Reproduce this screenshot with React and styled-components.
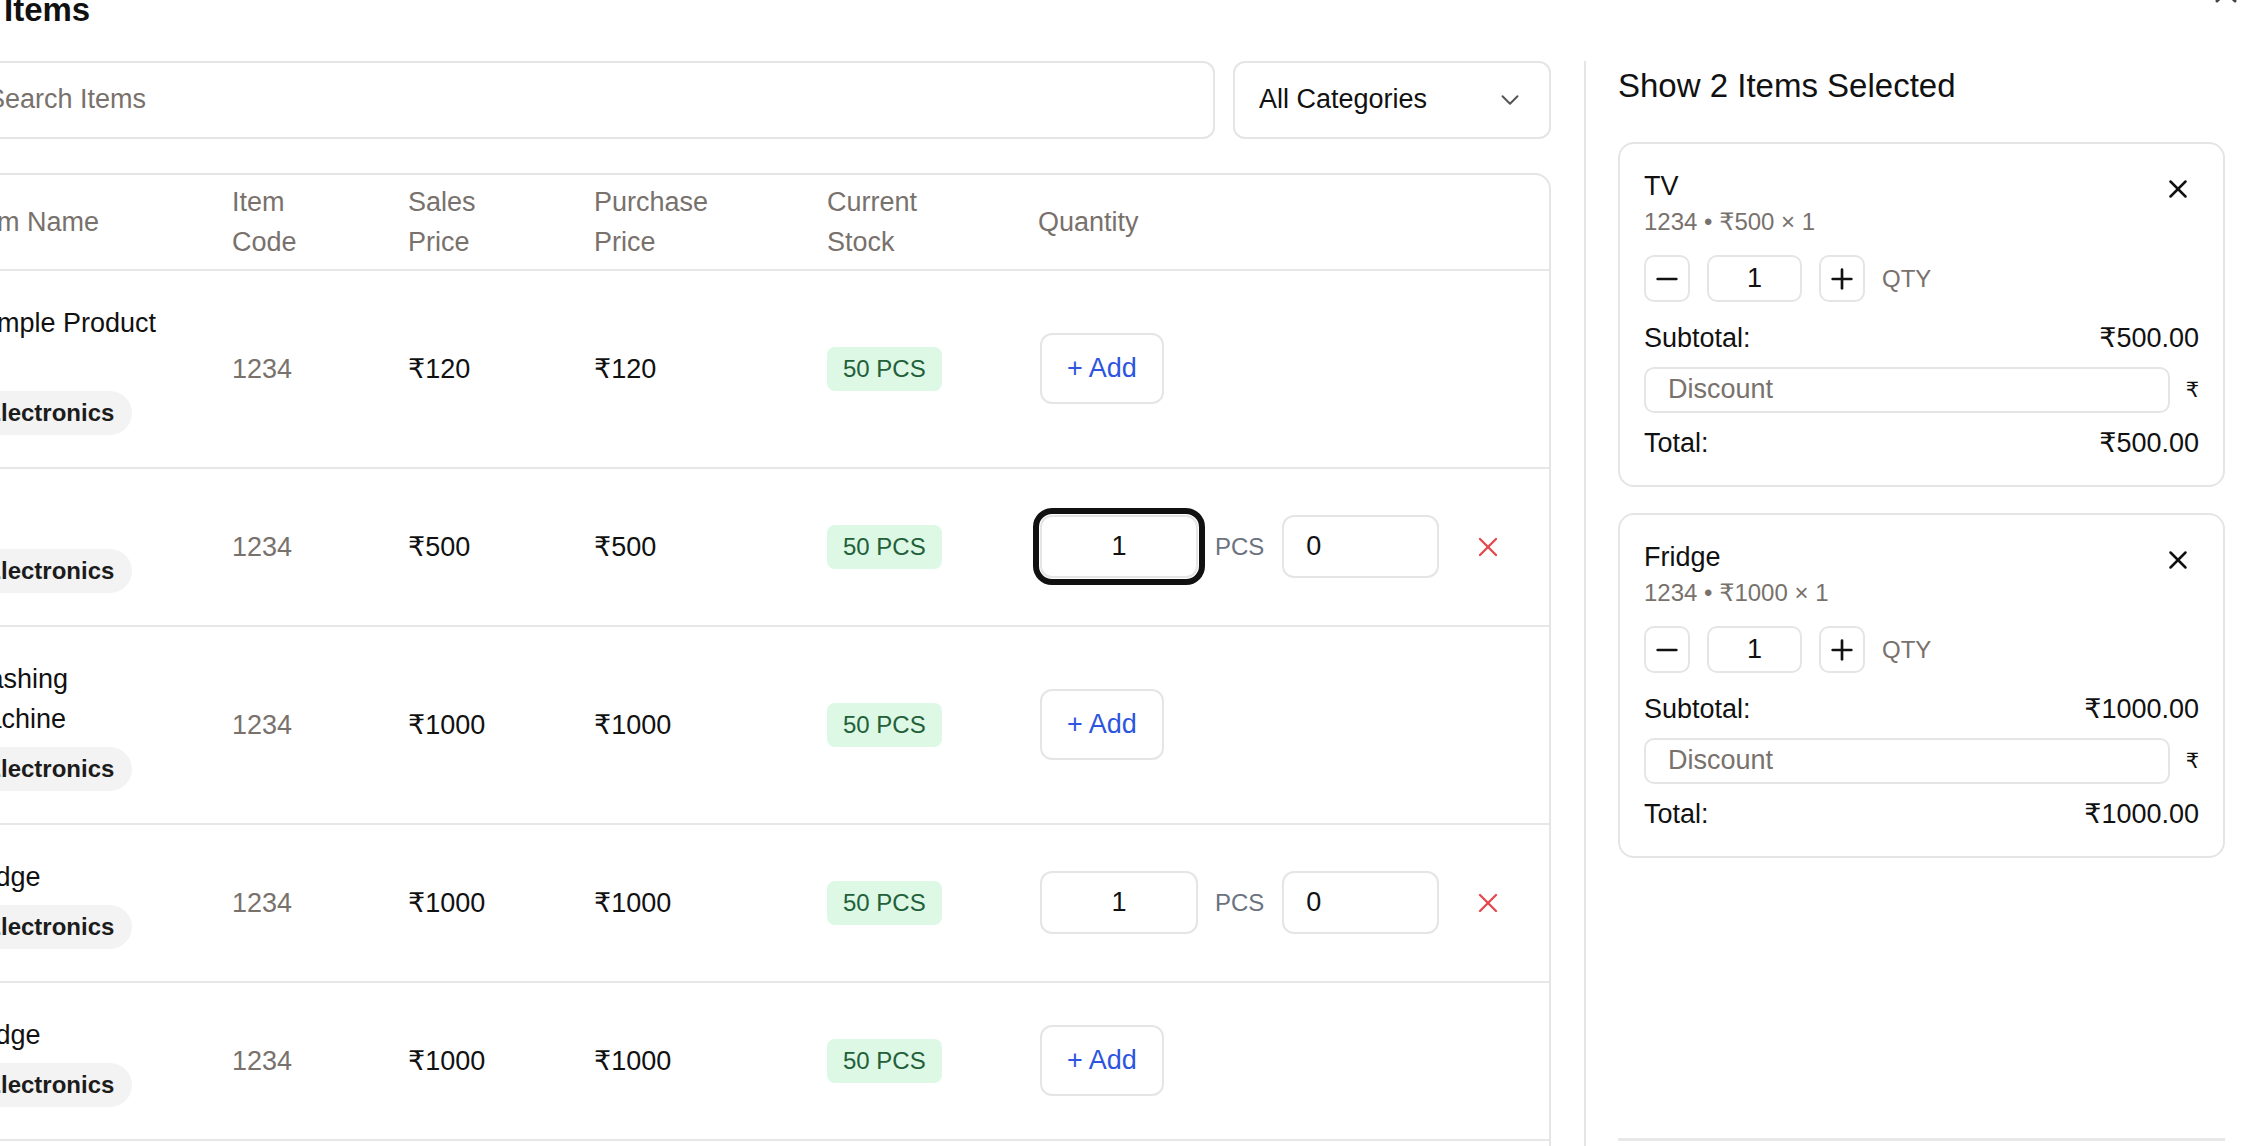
import React from 'react';
import styled, { createGlobalStyle, css } from 'styled-components';
import { X, Plus, Minus, ChevronDown, Search } from 'lucide-react';

const GlobalStyle = createGlobalStyle`
  *, *::before, *::after { box-sizing: border-box; }
  html, body {
    margin: 0;
    padding: 0;
    background: #ffffff;
    overflow: hidden;
  }
  body {
    font-family: "Liberation Sans", Arial, "DejaVu Sans", sans-serif;
    color: #111111;
  }
  input, button { font-family: inherit; }
`;

const Modal = styled.div`
  width: 2309px;
  margin: -15px 0 0 -59px;
  padding-right: 25px;
`;

const Header = styled.div`
  display: flex;
  justify-content: space-between;
  align-items: flex-start;
  padding-left: 63px;
`;

const Title = styled.h2`
  margin: 0;
  font-size: 33px;
  line-height: 49.5px;
  font-weight: 700;
  color: #111;
`;

const CloseButton = styled.button`
  margin: -11px -19px 0 0;
  padding: 0;
  border: 0;
  background: none;
  color: #444;
  display: flex;
`;

const Body = styled.div`
  display: flex;
  margin-top: 26px;
  height: 1157px;
`;

const LeftColumn = styled.div`
  width: 1610px;
  flex-shrink: 0;
`;

const SearchRow = styled.div`
  display: flex;
  gap: 18px;
`;

const SearchBox = styled.label`
  flex: 1;
  height: 78px;
  display: flex;
  align-items: center;
  gap: 6px;
  padding: 0 20px 0 14px;
  border: 2px solid #e5e5e5;
  border-radius: 12px;
  color: #9a9a9a;
`;

const SearchInput = styled.input`
  flex: 1;
  border: 0;
  outline: 0;
  background: transparent;
  font-size: 27px;
  color: #111;
  padding: 0;

  &::placeholder { color: #78716c; }
`;

const SelectBox = styled.div`
  width: 318px;
  height: 78px;
  display: flex;
  align-items: center;
  justify-content: space-between;
  padding: 0 24px;
  border: 2px solid #e5e5e5;
  border-radius: 12px;
  font-size: 27px;
  color: #111;

  svg { color: #555; }
`;

const TableWrap = styled.div`
  margin-top: 34px;
  border: 2px solid #e5e5e5;
  border-radius: 16px;
  overflow: hidden;
`;

const Table = styled.table`
  width: 100%;
  border-collapse: collapse;
  table-layout: fixed;
`;

const Th = styled.th`
  text-align: left;
  font-weight: 400;
  font-size: 27px;
  line-height: 40px;
  color: #78716c;
  padding: 7px 40px 7px 24px;
  vertical-align: middle;
  border-bottom: 2px solid #e7e7e7;
`;

const Td = styled.td`
  padding: 32px ${(p) => (p.$wide ? '24px' : '40px')} 32px
    ${(p) => (p.$wide ? '26px' : '24px')};
  vertical-align: middle;
  font-size: 27px;
  line-height: 40px;
  color: ${(p) => (p.$muted ? '#78716c' : '#111')};
  border-bottom: 2px solid #e7e7e7;
`;

const NameCell = styled.div`
  display: flex;
  flex-direction: column;
  align-items: flex-start;
  gap: 8px;
`;

const NameText = styled.div`
  line-height: 40px;
  margin-left: -3px;
`;

const Chip = styled.span`
  display: inline-block;
  height: 44px;
  line-height: 44px;
  padding: 0 18px;
  border-radius: 22px;
  background: #f3f3f3;
  font-size: 24px;
  font-weight: 700;
  color: #1c1c1c;
`;

const StockBadge = styled.span`
  display: inline-block;
  height: 44px;
  line-height: 44px;
  padding: 0 16px;
  border-radius: 8px;
  background: #ddf8e5;
  color: #22603a;
  font-size: 24px;
`;

const AddButton = styled.button`
  height: 71px;
  padding: 0 25px;
  border: 2px solid #e5e5e5;
  border-radius: 12px;
  background: #fff;
  color: #2d55e0;
  font-size: 27px;
  line-height: 1;
`;

const QtyControls = styled.div`
  display: flex;
  align-items: center;
`;

const fieldBase = css`
  height: 63px;
  border: 2px solid #e5e5e5;
  border-radius: 12px;
  background: #fff;
  font-size: 27px;
  color: #111;
  outline: none;
`;

const QtyField = styled.input`
  ${fieldBase};
  width: 158px;
  text-align: center;

  ${(p) =>
    p.$focused &&
    css`
      outline: 6px solid #111;
      outline-offset: 1px;
    `}
`;

const UnitLabel = styled.span`
  margin: 0 18px 0 17px;
  font-size: 24px;
  color: #6b7280;
`;

const DiscountField = styled.input`
  ${fieldBase};
  width: 157px;
  padding-left: 22px;
`;

const RemoveButton = styled.button`
  margin-left: 33px;
  padding: 0;
  border: 0;
  background: none;
  color: #e5484d;
  display: flex;
`;

const RightPanel = styled.aside`
  flex: 1;
  margin-left: 33px;
  padding-left: 32px;
  border-left: 2px solid #e5e5e5;
  display: flex;
  flex-direction: column;
`;

const PanelTitle = styled.h3`
  margin: 0 0 32px;
  font-size: 33px;
  line-height: 49.5px;
  font-weight: 400;
  color: #111;
`;

const CardList = styled.div`
  display: flex;
  flex-direction: column;
  gap: 26px;
`;

const Card = styled.div`
  border: 2px solid #e5e5e5;
  border-radius: 16px;
  padding: 24px 24px 22px;
`;

const CardHead = styled.div`
  display: flex;
  justify-content: space-between;
  align-items: flex-start;
`;

const CardName = styled.div`
  font-size: 27px;
  line-height: 37px;
  color: #111;
`;

const CardMeta = styled.div`
  font-size: 24px;
  line-height: 33px;
  color: #78716c;
`;

const IconButton = styled.button`
  padding: 6px;
  border: 0;
  background: none;
  color: #111;
  display: flex;
`;

const StepRow = styled.div`
  margin-top: 17px;
  display: flex;
  align-items: center;
  gap: 17px;
`;

const StepButton = styled.button`
  width: 46px;
  height: 47px;
  padding: 0;
  border: 2px solid #e5e5e5;
  border-radius: 10px;
  background: #fff;
  color: #111;
  display: flex;
  align-items: center;
  justify-content: center;
`;

const StepField = styled.input`
  width: 95px;
  height: 47px;
  border: 2px solid #e5e5e5;
  border-radius: 10px;
  text-align: center;
  font-size: 27px;
  color: #111;
  outline: none;
`;

const QtyText = styled.span`
  font-size: 24px;
  color: #78716c;
`;

const SumRow = styled.div`
  margin-top: ${(p) => p.$gap}px;
  display: flex;
  justify-content: space-between;
  font-size: 27px;
  line-height: 40.5px;
  color: #111;
`;

const DiscountRow = styled.div`
  margin-top: 8px;
  display: flex;
  align-items: center;
  gap: 16px;
`;

const DiscountInput = styled.input`
  flex: 1;
  height: 46px;
  padding-left: 22px;
  border: 2px solid #e5e5e5;
  border-radius: 10px;
  font-size: 27px;
  color: #111;
  outline: none;

  &::placeholder { color: #78716c; }
`;

const Rupee = styled.span`
  font-size: 21px;
  color: #111;
`;

const Footer = styled.div`
  margin-top: auto;
  height: 80px;
  border-top: 3px solid #e8e8e8;
`;

const items = [
  { name: 'Sample Product 1', price: 120 },
  { name: 'TV', price: 500, qty: 1, focused: true },
  { name: 'Washing Machine', price: 1000 },
  { name: 'Fridge', price: 1000, qty: 1 },
  { name: 'Fridge', price: 1000 },
  { name: 'Microwave', price: 800 },
];

const selected = [
  { name: 'TV', price: 500 },
  { name: 'Fridge', price: 1000 },
];

const columns = [265, 176, 186, 233, 211, null];

export default function App() {
  return (
    <>
      <GlobalStyle />
      <Modal>
        <Header>
          <Title>Items</Title>
          <CloseButton aria-label="Close">
            <X size={36} strokeWidth={2} />
          </CloseButton>
        </Header>

        <Body>
          <LeftColumn>
            <SearchRow>
              <SearchBox>
                <Search size={24} />
                <SearchInput placeholder="Search Items" />
              </SearchBox>
              <SelectBox>
                <span>All Categories</span>
                <ChevronDown size={30} strokeWidth={1.6} />
              </SelectBox>
            </SearchRow>

            <TableWrap>
              <Table>
                <colgroup>
                  {columns.map((w, i) => (
                    <col key={i} style={w ? { width: w } : undefined} />
                  ))}
                </colgroup>
                <thead>
                  <tr>
                    <Th>Item Name</Th>
                    <Th>Item Code</Th>
                    <Th>Sales Price</Th>
                    <Th>Purchase Price</Th>
                    <Th>Current Stock</Th>
                    <Th>Quantity</Th>
                  </tr>
                </thead>
                <tbody>
                  {items.map((item, i) => (
                    <tr key={i}>
                      <Td>
                        <NameCell>
                          <NameText>{item.name}</NameText>
                          <Chip>Electronics</Chip>
                        </NameCell>
                      </Td>
                      <Td $muted>1234</Td>
                      <Td>₹{item.price}</Td>
                      <Td>₹{item.price}</Td>
                      <Td>
                        <StockBadge>50 PCS</StockBadge>
                      </Td>
                      <Td $wide>
                        {item.qty ? (
                          <QtyControls>
                            <QtyField $focused={item.focused} defaultValue={item.qty} />
                            <UnitLabel>PCS</UnitLabel>
                            <DiscountField defaultValue="0" />
                            <RemoveButton aria-label="Remove">
                              <X size={32} strokeWidth={1.75} />
                            </RemoveButton>
                          </QtyControls>
                        ) : (
                          <AddButton>+ Add</AddButton>
                        )}
                      </Td>
                    </tr>
                  ))}
                </tbody>
              </Table>
            </TableWrap>
          </LeftColumn>

          <RightPanel>
            <PanelTitle>Show {selected.length} Items Selected</PanelTitle>
            <CardList>
              {selected.map((s) => (
                <Card key={s.name}>
                  <CardHead>
                    <div>
                      <CardName>{s.name}</CardName>
                      <CardMeta>1234 • ₹{s.price} × 1</CardMeta>
                    </div>
                    <IconButton aria-label="Remove">
                      <X size={30} strokeWidth={2} />
                    </IconButton>
                  </CardHead>
                  <StepRow>
                    <StepButton aria-label="Decrease">
                      <Minus size={32} strokeWidth={2} />
                    </StepButton>
                    <StepField defaultValue="1" />
                    <StepButton aria-label="Increase">
                      <Plus size={32} strokeWidth={2} />
                    </StepButton>
                    <QtyText>QTY</QtyText>
                  </StepRow>
                  <SumRow $gap={16}>
                    <span>Subtotal:</span>
                    <span>₹{s.price.toFixed(2)}</span>
                  </SumRow>
                  <DiscountRow>
                    <DiscountInput placeholder="Discount" />
                    <Rupee>₹</Rupee>
                  </DiscountRow>
                  <SumRow $gap={10}>
                    <span>Total:</span>
                    <span>₹{s.price.toFixed(2)}</span>
                  </SumRow>
                </Card>
              ))}
            </CardList>
            <Footer />
          </RightPanel>
        </Body>
      </Modal>
    </>
  );
}
